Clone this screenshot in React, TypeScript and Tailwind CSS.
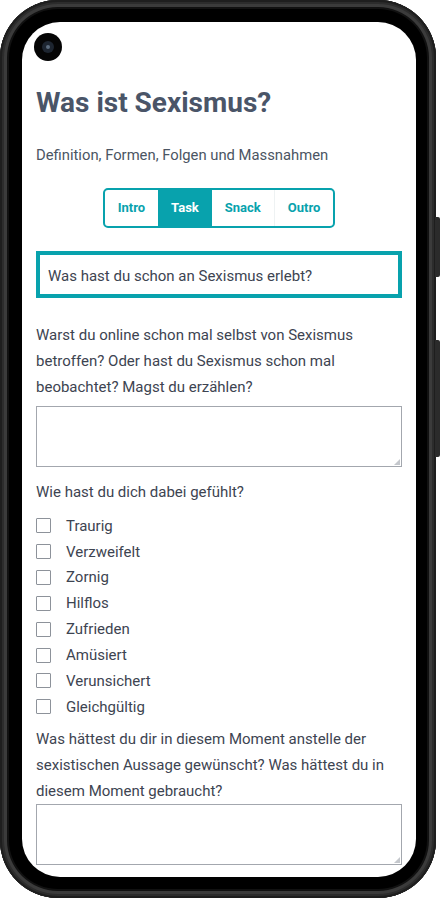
import React from "react";

const feelings = [
  "Traurig",
  "Verzweifelt",
  "Zornig",
  "Hilflos",
  "Zufrieden",
  "Amüsiert",
  "Verunsichert",
  "Gleichgültig",
];

function Area({ className }: { className: string }) {
  return (
    <div className={"relative " + className}>
      <textarea className="block w-full h-[61px] border border-[#a3a7ae] bg-white resize-none" />
      <div className="absolute right-[2px] bottom-[2px] w-0 h-0 border-l-[6px] border-l-transparent border-b-[6px] border-b-[#c4c7cc]" />
    </div>
  );
}

export default function App() {
  return (
    <div className="w-[441px] h-[900px] bg-white relative overflow-hidden" style={{ fontFamily: "Roboto, 'Noto Sans', sans-serif" }}>
      {/* side buttons */}
      <div className="absolute left-[435px] top-[217px] w-[5px] h-[60px] rounded-r-[2px] bg-[#2b2b2b]" />
      <div className="absolute left-[435px] top-[340px] w-[5px] h-[117px] rounded-r-[2px] bg-[#2b2b2b]" />
      {/* phone frame */}
      <div className="w-[436px] h-[898px] rounded-[58px] bg-black pl-[22px] pr-[20px] pt-[22px] pb-[21px] shadow-[inset_0_0_0_2px_#1e1e1e,inset_0_0_0_4px_#2c2c2c,inset_0_0_0_7px_#3b3b3b,inset_0_0_0_9px_#111]">
        <div className="relative w-[394px] h-[855px] bg-white rounded-[38px] overflow-hidden">
          {/* camera */}
          <div className="absolute left-[12px] top-[11px] w-[28px] h-[28px] rounded-full bg-[#050505] flex items-center justify-center">
            <div className="w-[12px] h-[12px] rounded-full bg-[#1d2530] flex items-center justify-center">
              <div className="w-[4px] h-[4px] rounded-full bg-[#5b6b7c]" />
            </div>
          </div>

          <div className="px-[14px] pt-[63px] text-[#374151]">
            <h1 className="text-[28px] leading-[36px] font-bold text-[#4a5568]">Was ist Sexismus?</h1>
            <p className="mt-[24px] text-[14.8px] leading-[21px] text-[#4b5563]">
              Definition, Formen, Folgen und Massnahmen
            </p>

            <div className="mt-[22px] flex justify-center">
              <div className="flex h-[40px] border-2 border-[#08a2ad] rounded-[5px] overflow-hidden text-[13px] font-bold">
                <div className="px-[13px] flex items-center text-[#08a2ad]">Intro</div>
                <div className="px-[13px] flex items-center bg-[#08a2ad] text-white">Task</div>
                <div className="px-[13px] flex items-center text-[#08a2ad]">Snack</div>
                <div className="px-[13px] flex items-center text-[#08a2ad] border-l border-[#eef2f3]">Outro</div>
              </div>
            </div>

            <div className="mt-[23px] border-4 border-[#08a2ad] pl-[8px] pt-[8px] pb-[5px] text-[15px] leading-[26px] text-[#3d4451]">
              Was hast du schon an Sexismus erlebt?
            </div>

            <p className="mt-[24px] text-[15px] leading-[26px] text-[#3d4451]">
              Warst du online schon mal selbst von Sexismus betroffen? Oder hast du Sexismus schon mal beobachtet? Magst du erzählen?
            </p>
            <Area className="mt-[6px]" />

            <p className="mt-[12px] text-[15px] leading-[26px] text-[#3d4451]">Wie hast du dich dabei gefühlt?</p>
            <div className="mt-[8px] flex flex-col">
              {feelings.map((f) => (
                <label key={f} className="h-[25.85px] flex items-center gap-[15px] text-[15px] text-[#3d4451]">
                  <span className="w-[15px] h-[15px] border border-[#8d929a] rounded-[1px] bg-white shrink-0" />
                  <span>{f}</span>
                </label>
              ))}
            </div>

            <p className="mt-[6px] text-[15px] leading-[26px] text-[#3d4451]">
              Was hättest du dir in diesem Moment anstelle der sexistischen Aussage gewünscht? Was hättest du in diesem Moment gebraucht?
            </p>
            <Area className="" />
          </div>
        </div>
      </div>
    </div>
  );
}
